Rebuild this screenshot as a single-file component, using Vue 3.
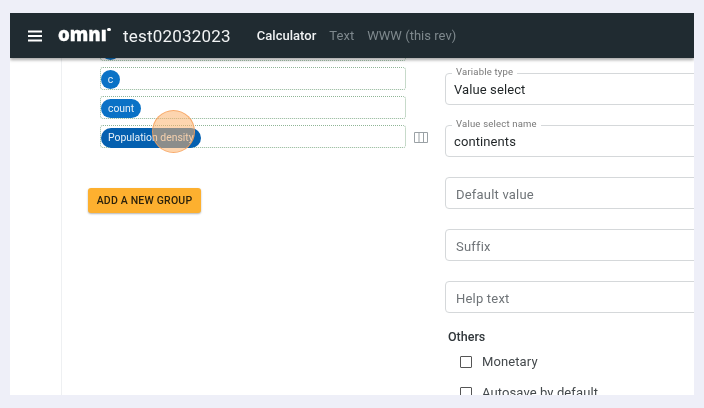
<script setup>
const rows = [
  { label: 'c', cls: 'chip round' },
  { label: 'count', cls: 'chip' },
  { label: 'Population density', cls: 'chip dark' }
]
const fields = [
  { label: 'Variable type', value: 'Value select' },
  { label: 'Value select name', value: 'continents' },
  { placeholder: 'Default value' },
  { placeholder: 'Suffix' },
  { placeholder: 'Help text' }
]
const options = ['Monetary', 'Autosave by default']
</script>

<template>
  <div class="page">
    <div class="frame">
      <header class="bar">
        <svg class="burger" width="14" height="12" viewBox="0 0 14 12">
          <path d="M0 1.500h14M0 6h14M0 10.500h14" stroke="#fff" stroke-width="1.800" />
        </svg>
        <span class="logo">omnı<i class="dot"></i></span>
        <span class="title">test02032023</span>
        <nav class="tabs">
          <span class="tab on">Calculator</span>
          <span class="tab">Text</span>
          <span class="tab">WWW (this rev)</span>
        </nav>
      </header>
      <div class="body">
        <aside class="side"></aside>
        <main class="left">
          <div class="drop"><span class="chip round">a</span></div>
          <div v-for="(r, i) in rows" :key="r.label" class="row">
            <div class="drop">
              <span :class="r.cls">{{ r.label }}</span>
            </div>
            <svg v-if="i === 2" class="cols" width="14" height="11" viewBox="0 0 14 11">
              <path d="M.5.5h13v10H.5zM5 .5v10M9.500 .5v10" fill="none" stroke="#9aa1a5" stroke-width="1" />
            </svg>
          </div>
          <button class="add">ADD A NEW GROUP</button>
        </main>
        <section class="right">
          <div v-for="f in fields" :key="f.label || f.placeholder" class="field">
            <span v-if="f.label" class="legend">{{ f.label }}</span>
            <span :class="f.label ? 'val' : 'ph'">{{ f.value || f.placeholder }}</span>
          </div>
          <div class="others">Others</div>
          <label v-for="o in options" :key="o" class="opt">
            <span class="box"></span>{{ o }}
          </label>
        </section>
      </div>
      <div class="pulse"></div>
    </div>
  </div>
</template>

<style>
html, body { margin: 0; background: #eeeff8; }
</style>

<style scoped>
.page {
  width: 704px;
  height: 408px;
  padding: 13px 10px;
  box-sizing: border-box;
  background: #eeeff8;
  overflow: hidden;
  font-family: Roboto, "Liberation Sans", sans-serif;
}
.frame {
  position: relative;
  height: 382px;
  background: #fff;
  overflow: hidden;
  display: flex;
  flex-direction: column;
  filter: blur(0.4px);
}
.bar {
  flex: none;
  height: 45px;
  background: #202b31;
  display: flex;
  align-items: center;
  padding-left: 18px;
  box-shadow: 0 2px 3px rgba(0,0,0,.35);
  position: relative;
  z-index: 2;
  color: #fff;
}
.burger { margin-right: 16px; }
.logo {
  font: 800 18.500px/1 "Open Sans", sans-serif;
  -webkit-text-stroke: .3px #fff;
  position: relative;
  width: 58px;
  margin-top: -3px;
}
.dot {
  position: absolute;
  width: 3.500px;
  height: 3.500px;
  border-radius: 50%;
  background: #fff;
  left: 49px;
  top: 3px;
}
.title { font-size: 17px; letter-spacing: .2px; margin-left: 7px; color: #f1f3f4; }
.tabs { display: flex; gap: 13px; margin-left: 26px; font-size: 13px; letter-spacing: .03px; }
.tab { color: #7e888d; }
.tab.on { color: #f0f2f3; font-weight: 500; }
.body { flex: 1; display: flex; min-height: 0; }
.side { flex: none; width: 51px; border-right: 1.500px solid #eef0f2; }
.left { flex: none; width: 383px; padding: 0 0 0 25px; box-sizing: border-box; margin-top: -20px; }
.row { display: flex; align-items: center; gap: 8px; }
.drop {
  flex: none;
  width: 306px;
  height: 23px;
  box-sizing: border-box;
  border: 1px dotted #8fb596;
  border-radius: 3px;
  margin: 0 0 6px 13px;
  display: flex;
  align-items: center;
}
.cols { margin-bottom: 5px; }
.chip {
  height: 19px;
  margin-top: 1px;
  border-radius: 10px;
  padding: 0 7px;
  background: #0a72c6;
  color: #e8f1f8;
  font-size: 10.400px;
  line-height: 19px;
  white-space: nowrap;
}
.chip.round { width: 19px; padding: 0; text-align: center; }
.chip.dark { background: #0460b0; height: 20px; line-height: 20px; margin-top: 2px; }
.add {
  display: block;
  margin-top: 34px;
  margin-left: 1px;
  width: 113px;
  height: 25px;
  border: 0;
  border-radius: 3px;
  background: #fdb02f;
  color: #2c220c;
  font: 500 10.500px Roboto, sans-serif;
  letter-spacing: .2px;
  padding: 0;
  box-shadow: 0 1px 2px rgba(0,0,0,.3);
}
.right { flex: none; width: 280px; padding-top: 15px; }
.field {
  position: relative;
  height: 32px;
  box-sizing: border-box;
  border: 1.500px solid #d5d8da;
  border-radius: 4px;
  margin-bottom: 20px;
  display: flex;
  align-items: center;
  padding: 0 8px;
  font-size: 13px;
}
.legend {
  position: absolute;
  left: 6px;
  top: -8px;
  padding: 0 4px;
  background: #fff;
  font-size: 9.500px;
  line-height: 12px;
  color: #777;
  letter-spacing: .2px;
}
.val { color: #1f2426; letter-spacing: .1px; padding-top: 1px; }
.ph { color: #6f7478; letter-spacing: .2px; padding: 2px 0 0 2px; }
.others { font-size: 12.500px; font-weight: 500; color: #30363a; margin: -4px 0 -4px 3px; line-height: 16px; }
.opt {
  display: flex;
  align-items: center;
  gap: 10px;
  margin: 10px 0 0 15px;
  font-size: 13px;
  color: #44494c;
  letter-spacing: .1px;
  line-height: 16px;
  height: 21px;
}
.box {
  flex: none;
  width: 10px;
  height: 10px;
  border: 1.500px solid #555;
  border-radius: 1px;
}
.pulse {
  position: absolute;
  left: 142px;
  top: 97px;
  width: 43px;
  height: 43px;
  box-sizing: border-box;
  border-radius: 50%;
  background: rgba(252, 178, 110, .55);
  border: 1px solid rgba(246, 160, 90, .8);
  z-index: 1;
}
</style>
